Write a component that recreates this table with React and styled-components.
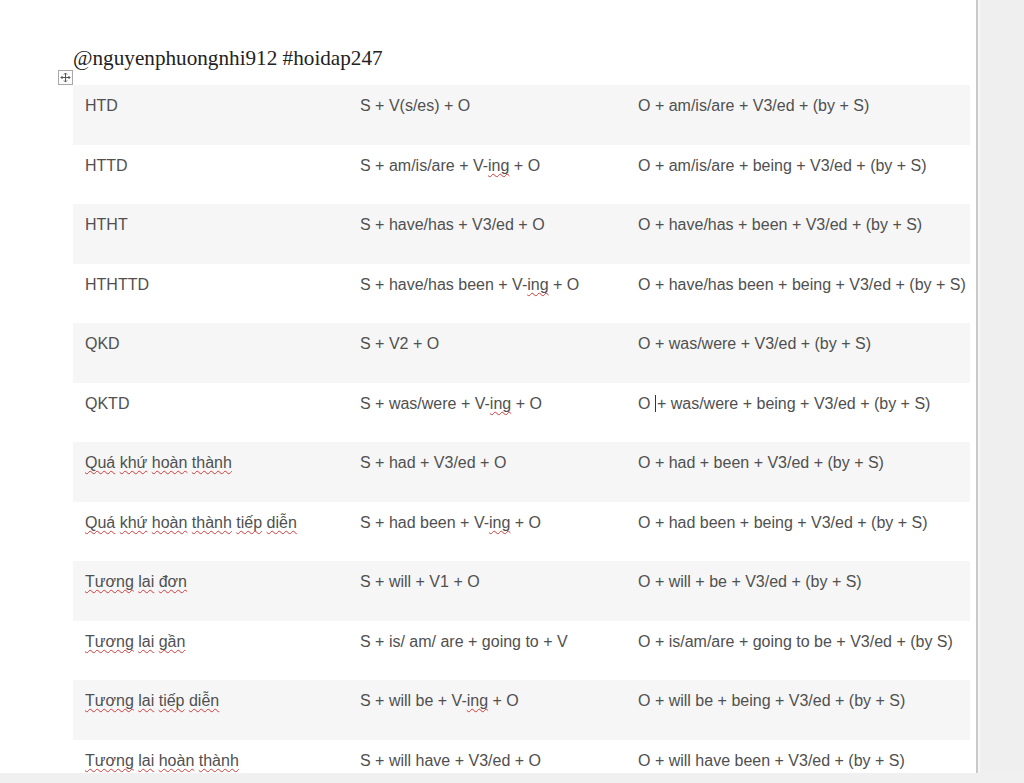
import React from "react";
import styled, { createGlobalStyle } from "styled-components";

const Global = createGlobalStyle`
  html, body { margin: 0; padding: 0; background: #ffffff; }
  body { width: 1024px; height: 783px; overflow: hidden; }
`;

const Shell = styled.div`
  display: flex;
  flex-direction: column;
  width: 1024px;
  height: 783px;
  overflow: hidden;
`;

const Workspace = styled.div`
  display: flex;
  flex: 0 0 773px;
  min-height: 0;
`;

const Page = styled.div`
  position: relative;
  width: 978px;
  flex: 0 0 978px;
  background: #ffffff;
  border-right: 2px solid #c9c9c9;
  overflow: hidden;
  padding: 46px 0 0 73px;
  box-sizing: border-box;
`;

const Side = styled.div`
  flex: 1;
  background: #efefef;
  border-left: 2px solid #f6f6f6;
`;

const BottomBar = styled.div`
  flex: 0 0 10px;
  background: #f0f0f0;
`;

const Title = styled.div`
  font-family: "Liberation Serif", "Times New Roman", serif;
  font-size: 21.2px;
  line-height: 24px;
  color: #222;
  margin-bottom: 15px;
`;

const TableWrap = styled.div`
  position: relative;
  width: 897px;
`;

const Handle = styled.div`
  position: absolute;
  left: -15px;
  top: -15px;
  width: 13px;
  height: 13px;
  border: 1px solid #a8a8a8;
  background: #fbfbfb;
  display: flex;
  align-items: center;
  justify-content: center;
`;

const Row = styled.div`
  display: grid;
  grid-template-columns: 275px 278px 1fr;
  height: 59.5px;
  background: ${(p) => (p.$striped ? "#f6f6f6" : "#ffffff")};
  font-family: "Liberation Sans", Arial, sans-serif;
  font-size: 16px;
  line-height: 18px;
  color: #505050;
`;

const Cell = styled.div`
  padding: 12px 0 0 12px;
  white-space: nowrap;
`;

const Squiggle = styled.span`
  text-decoration: underline wavy #d23a3a;
  text-decoration-thickness: 1px;
  text-underline-offset: 2px;
  text-decoration-skip-ink: none;
`;

const Caret = styled.span`
  display: inline-block;
  width: 0;
  height: 17px;
  border-left: 1px solid #333;
  vertical-align: -3px;
  margin-right: 1px;
`;

const sq = (w) => <Squiggle>{w}</Squiggle>;

const words = (s) =>
  s.split(" ").map((w, i, a) => (
    <React.Fragment key={i}>
      {sq(w)}
      {i < a.length - 1 ? " " : ""}
    </React.Fragment>
  ));

const ing = (pre, post) => (
  <>
    {pre}
    {sq("ing")}
    {post}
  </>
);

const rows = [
  ["HTD", "S + V(s/es) + O", "O + am/is/are + V3/ed + (by + S)"],
  ["HTTD", ing("S + am/is/are + V-", " + O"), "O + am/is/are + being + V3/ed + (by + S)"],
  ["HTHT", "S + have/has + V3/ed + O", "O + have/has + been + V3/ed + (by + S)"],
  ["HTHTTD", ing("S + have/has been + V-", " + O"), "O + have/has been + being + V3/ed + (by + S)"],
  ["QKD", "S + V2 + O", "O + was/were + V3/ed + (by + S)"],
  [
    "QKTD",
    ing("S + was/were + V-", " + O"),
    <>
      O <Caret />+ was/were + being + V3/ed + (by + S)
    </>,
  ],
  [words("Quá khứ hoàn thành"), "S + had + V3/ed + O", "O + had + been + V3/ed + (by + S)"],
  [words("Quá khứ hoàn thành tiếp diễn"), ing("S + had been + V-", " + O"), "O + had been + being + V3/ed + (by + S)"],
  [words("Tương lai đơn"), "S + will + V1 + O", "O + will + be + V3/ed + (by + S)"],
  [words("Tương lai gần"), "S + is/ am/ are + going to + V", "O + is/am/are + going to be + V3/ed + (by S)"],
  [words("Tương lai tiếp diễn"), ing("S + will be + V-", " + O"), "O + will be + being + V3/ed + (by + S)"],
  [words("Tương lai hoàn thành"), "S + will have + V3/ed + O", "O + will have been + V3/ed + (by + S)"],
];

const MoveIcon = () => (
  <svg width="11" height="11" viewBox="0 0 11 11" fill="none" stroke="#555" strokeWidth="1">
    <path d="M5.5 1v9M1 5.5h9" />
    <path d="M4 2.5l1.5-1.5 1.5 1.5M4 8.5l1.5 1.5 1.5-1.5M2.5 4L1 5.5l1.5 1.5M8.5 4L10 5.5 8.5 7" />
  </svg>
);

export default function App() {
  return (
    <>
      <Global />
      <Shell>
        <Workspace>
          <Page>
            <Title>@nguyenphuongnhi912 #hoidap247</Title>
            <TableWrap>
              <Handle>
                <MoveIcon />
              </Handle>
              {rows.map((r, i) => (
                <Row key={i} $striped={i % 2 === 0}>
                  <Cell>{r[0]}</Cell>
                  <Cell>{r[1]}</Cell>
                  <Cell>{r[2]}</Cell>
                </Row>
              ))}
            </TableWrap>
          </Page>
          <Side />
        </Workspace>
        <BottomBar />
      </Shell>
    </>
  );
}
